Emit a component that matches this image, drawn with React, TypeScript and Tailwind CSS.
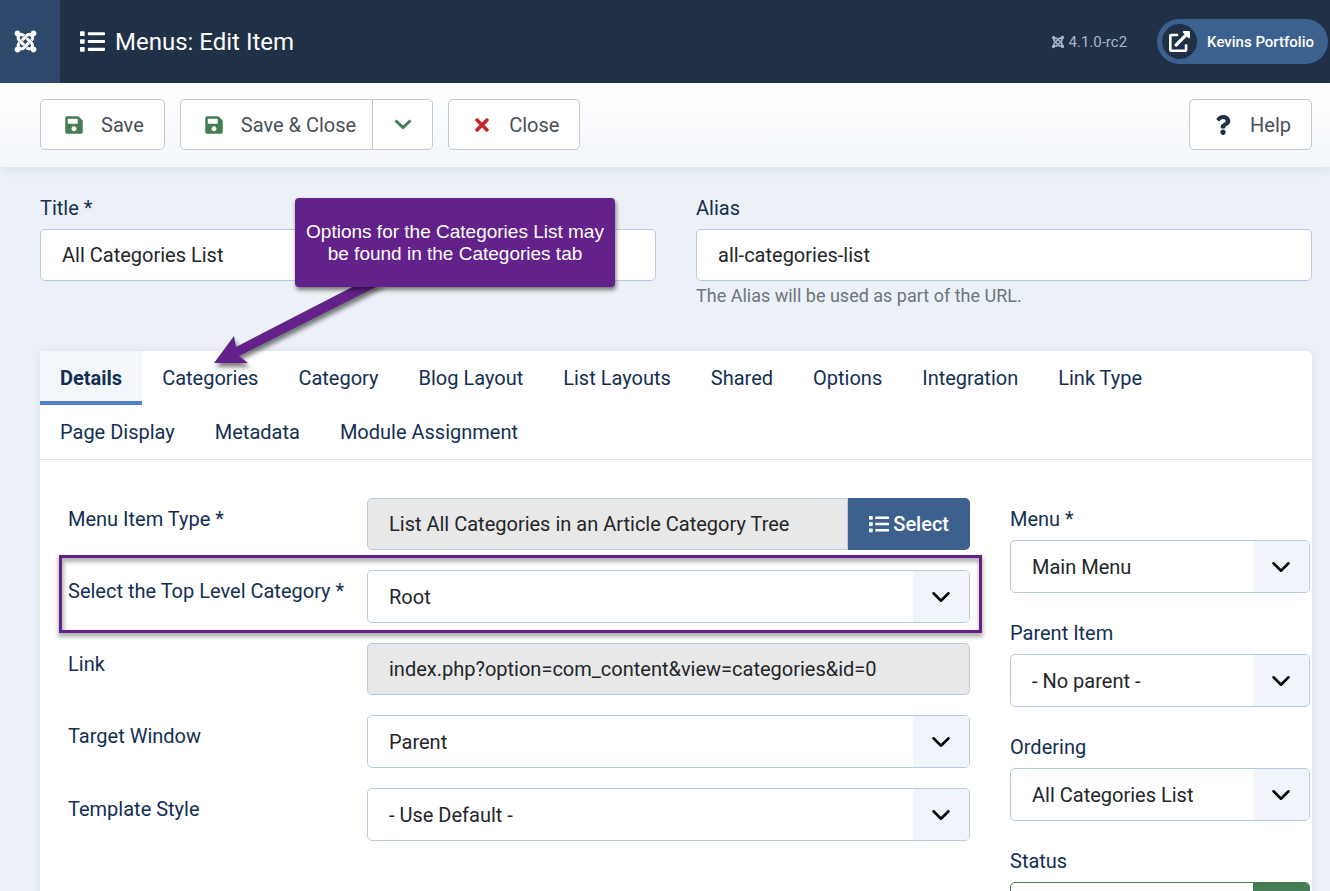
import type { ReactNode } from 'react';
import {
  FaExternalLinkAlt,
  FaJoomla,
  FaList,
  FaQuestion,
  FaSave,
  FaTimes,
} from 'react-icons/fa';
import clsx from 'clsx';

const tabs = [
  'Details',
  'Categories',
  'Category',
  'Blog Layout',
  'List Layouts',
  'Shared',
  'Options',
  'Integration',
  'Link Type',
  'Page Display',
  'Metadata',
  'Module Assignment',
];

function Chevron({ className }: { className?: string }) {
  return (
    <svg viewBox="0 0 16 16" fill="none" className={className}>
      <path d="M2 5l6 6 6-6" stroke="currentColor" strokeWidth="2" strokeLinecap="round" strokeLinejoin="round" />
    </svg>
  );
}

interface ToolbarButtonProps {
  icon: ReactNode;
  children: ReactNode;
  className?: string;
}

function ToolbarButton({ icon, children, className }: ToolbarButtonProps) {
  return (
    <button
      type="button"
      className={clsx(
        'flex h-[51px] items-center gap-[15px] border border-[#c0c8d8] bg-white pl-[21px] text-[#495057]',
        className ?? 'rounded-[5px] pr-5',
      )}
    >
      <span className="flex w-6 justify-center">{icon}</span>
      {children}
    </button>
  );
}

interface SelectProps {
  id: string;
  options: string[];
  success?: boolean;
}

function Select({ id, options, success }: SelectProps) {
  return (
    <div className="relative">
      <select
        id={id}
        className={clsx(
          'block h-[53px] w-full appearance-none rounded-[5px] border bg-white pl-[21px] pr-16 text-[#22262a]',
          success ? 'border-[#457d54]' : 'border-[#b8c9e0]',
        )}
      >
        {options.map((option) => (
          <option key={option}>{option}</option>
        ))}
      </select>
      <span
        className={clsx(
          'pointer-events-none absolute inset-y-px right-px flex w-14 items-center justify-center rounded-r-[4px]',
          success ? 'bg-[#457d54] text-white' : 'bg-[#f0f4fb] text-black',
        )}
      >
        <Chevron className="size-5" />
      </span>
    </div>
  );
}

interface RowProps {
  id: string;
  label: string;
  highlight?: boolean;
  children: ReactNode;
}

function Row({ id, label, highlight, children }: RowProps) {
  return (
    <div className="relative flex">
      <label htmlFor={id} className="w-[299px] shrink-0 pt-1.5">
        {label}
      </label>
      <div className="min-w-0 flex-1">{children}</div>
      {highlight && (
        <div className="pointer-events-none absolute -bottom-2.5 -left-[9px] -right-3 -top-[15px] border-[3px] border-[#632289] shadow-[0_3px_4px_1px_rgba(0,0,0,0.3),inset_1px_3px_4px_1px_rgba(0,0,0,0.3)]" />
      )}
    </div>
  );
}

interface SideFieldProps extends SelectProps {
  label: string;
}

function SideField({ label, ...select }: SideFieldProps) {
  return (
    <div className="flex flex-col gap-1.5">
      <label htmlFor={select.id}>{label}</label>
      <Select {...select} />
    </div>
  );
}

function Callout() {
  return (
    <div className="absolute left-[295px] top-[31px] z-10 w-80">
      <svg
        viewBox="0 0 180 90"
        className="absolute -left-[85px] top-[85px] h-[90px] w-[180px] drop-shadow-[2px_4px_2px_rgba(0,0,0,0.5)]"
      >
        <path d="M150 0L26 64L24 53L4 80H38L29 73L174 0Z" fill="#632289" />
      </svg>
      <div className="relative flex h-[89px] items-center justify-center rounded-[4px] bg-[#632289] text-center font-['Liberation_Sans',Arial,sans-serif] text-[19px] leading-[22px] text-white shadow-[1px_3px_4px_rgba(0,0,0,0.5)]">
        Options for the Categories List may
        <br />
        be found in the Categories tab
      </div>
    </div>
  );
}

export default function App() {
  return (
    <div className="h-screen overflow-hidden bg-[#ebf1f6] font-[Roboto,sans-serif] text-[20px] leading-[30px] text-[#132f53]">
      <header className="flex h-[83px] items-center bg-[#203047] text-white">
        <a href="#home" aria-label="Home" className="flex h-full w-[60px] items-center bg-[#2e486c] pl-[13px]">
          <FaJoomla className="size-[25px]" />
        </a>
        <h1 className="flex flex-1 items-center gap-2.5 pl-5 text-[24px]">
          <FaList className="size-[25px]" />
          Menus: Edit Item
        </h1>
        <div className="flex items-center gap-1 pr-[30px] text-[15px] text-[#a9b6ca]">
          <FaJoomla className="size-3.5" />
          4.1.0-rc2
        </div>
        <a
          href="#site"
          className="mr-0.5 flex h-[45px] items-center gap-2.5 rounded-full bg-[#3d618f] pl-[5px] pr-3.5 text-[15px] font-medium"
        >
          <span className="flex size-[35px] items-center justify-center rounded-full bg-[#203047]">
            <FaExternalLinkAlt className="size-[21px]" />
          </span>
          Kevins Portfolio
        </a>
      </header>

      <div className="relative flex h-[84px] items-start gap-[15px] bg-linear-to-b from-white to-[#f3f6fa] pl-10 pr-[18px] pt-4 shadow-[0_3px_10px_rgba(20,50,90,0.08)]">
        <ToolbarButton icon={<FaSave className="size-5 text-[#457d54]" />}>Save</ToolbarButton>
        <div className="flex">
          <ToolbarButton className="rounded-l-[5px] pr-4" icon={<FaSave className="size-5 text-[#457d54]" />}>
            Save &amp; Close
          </ToolbarButton>
          <button
            type="button"
            aria-label="More save options"
            className="flex h-[51px] w-[60px] items-center justify-center rounded-r-[5px] border border-l-0 border-[#c0c8d8] bg-white text-[#457d54]"
          >
            <svg viewBox="0 0 18 11" className="h-[11px] w-[18px]" fill="none">
              <path d="M1.5 1.5L9 8.5L16.5 1.5" stroke="currentColor" strokeWidth="3" />
            </svg>
          </button>
        </div>
        <ToolbarButton icon={<FaTimes className="size-5 text-[#c52827]" />}>Close</ToolbarButton>
        <div className="ml-auto">
          <ToolbarButton icon={<FaQuestion className="size-5 text-[#203047]" />}>Help</ToolbarButton>
        </div>
      </div>

      <main className="pl-10 pr-[18px] pt-[26px]">
        <div className="grid grid-cols-2 gap-10">
          <div className="flex flex-col gap-1.5">
            <label htmlFor="title">Title *</label>
            <input
              id="title"
              defaultValue="All Categories List"
              className="h-[52px] w-full rounded-[5px] border border-[#b8c9e0] bg-white px-[21px] text-[#22262a]"
            />
          </div>
          <div className="flex flex-col">
            <label htmlFor="alias">Alias</label>
            <input
              id="alias"
              defaultValue="all-categories-list"
              aria-describedby="alias-desc"
              className="mt-1.5 h-[52px] w-full rounded-[5px] border border-[#b8c9e0] bg-white px-[21px] text-[#22262a]"
            />
            <small id="alias-desc" className="text-[18px] text-[#6d757e]">
              The Alias will be used as part of the URL.
            </small>
          </div>
        </div>

        <section className="mt-10 rounded-[5px] bg-white shadow-[0_0_10px_rgba(20,50,90,0.08)]">
          <div role="tablist" className="flex flex-wrap border-b border-[#dbe4f0]">
            {tabs.map((tab, index) => (
              <button
                key={tab}
                type="button"
                role="tab"
                aria-selected={index === 0}
                className={clsx(
                  'h-[54px] border-b-4 px-5 pt-1',
                  index === 0 ? 'border-[#5083c8] bg-[#f3f7fb] font-bold' : 'border-transparent',
                )}
              >
                {tab}
              </button>
            ))}
          </div>

          <div className="flex gap-10 pb-10 pl-7 pr-0.5 pt-[38px]">
            <div className="flex flex-1 flex-col gap-5">
              <Row id="type" label="Menu Item Type *">
                <div className="flex">
                  <input
                    id="type"
                    readOnly
                    defaultValue="List All Categories in an Article Category Tree"
                    className="h-[52px] min-w-0 flex-1 rounded-l-[5px] border border-[#b8c9e0] bg-[#e8e8e8] px-[21px] text-[#22262a]"
                  />
                  <button
                    type="button"
                    className="flex h-[52px] items-center gap-1 rounded-r-[5px] bg-[#3d618f] px-[21px] font-medium text-white"
                  >
                    <FaList className="size-5" />
                    Select
                  </button>
                </div>
              </Row>
              <Row id="category" label="Select the Top Level Category *" highlight>
                <Select id="category" options={['Root']} />
              </Row>
              <Row id="link" label="Link">
                <input
                  id="link"
                  readOnly
                  defaultValue="index.php?option=com_content&view=categories&id=0"
                  className="block h-[52px] w-full rounded-[5px] border border-[#b8c9e0] bg-[#e8e8e8] px-[21px] text-[#22262a]"
                />
              </Row>
              <Row id="target" label="Target Window">
                <Select id="target" options={['Parent']} />
              </Row>
              <Row id="style" label="Template Style">
                <Select id="style" options={['- Use Default -']} />
              </Row>
            </div>

            <aside className="flex w-[300px] flex-col gap-[25px] pt-1.5">
              <SideField id="menu" label="Menu *" options={['Main Menu']} />
              <SideField id="parent" label="Parent Item" options={['- No parent -']} />
              <SideField id="ordering" label="Ordering" options={['All Categories List']} />
              <SideField id="status" label="Status" options={['Published']} success />
            </aside>
          </div>
        </section>
      </main>

      <div className="absolute left-0 top-[167px]">
        <Callout />
      </div>
    </div>
  );
}
